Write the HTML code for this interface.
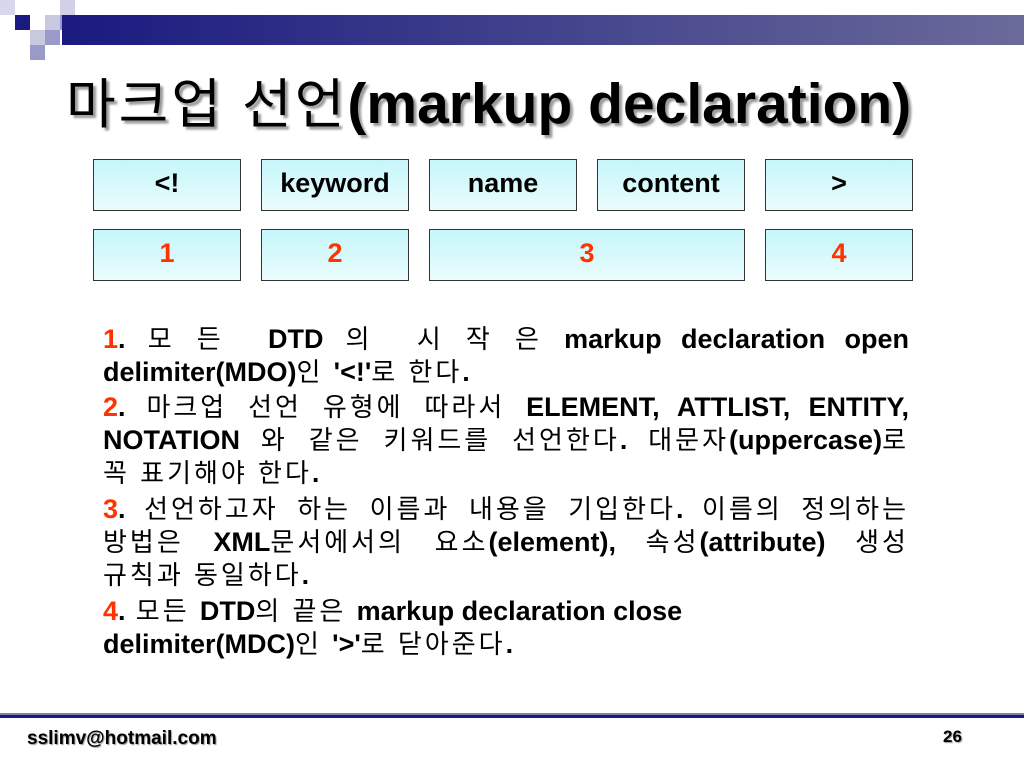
<!DOCTYPE html>
<html><head><meta charset="utf-8"><style>
*{margin:0;padding:0}
body{width:1024px;height:768px;position:relative;background:#fff;overflow:hidden;font-family:"Liberation Sans",Arial,"Noto Sans CJK KR",sans-serif}
.sq{position:absolute;width:15px;height:15px}
.bar{position:absolute;left:62px;top:15px;width:962px;height:30px;background:linear-gradient(90deg,#1a1a80,#3a3a8a 40%,#6a6a9a)}
.title{position:absolute;left:66px;top:71px;font-size:54px;letter-spacing:3px;line-height:66px;white-space:nowrap;color:#000;text-shadow:3px 3px 2px #999}
.title b{font-weight:bold;font-size:57px;letter-spacing:0}
.box{position:absolute;height:52px;border:1px solid #333;box-sizing:border-box;background:linear-gradient(180deg,#c6f6fb,#eafcfd);text-align:center;font-size:27px;font-weight:bold;line-height:47px}
.r{color:#ff3300}
.ln{position:absolute;left:103px;width:806px;font-size:26px;letter-spacing:3px;line-height:33px;white-space:nowrap}
.j{text-align:justify;text-align-last:justify;white-space:normal}
.ln b{font-weight:bold;font-size:27px;letter-spacing:0}
.foot{position:absolute;font-size:19px;font-weight:bold;text-shadow:1px 1px 1px #999}
</style></head><body>
<div class="sq" style="left:0;top:0;background:#d8d8ec"></div>
<div class="sq" style="left:15px;top:15px;background:#1a1a80"></div>
<div class="sq" style="left:30px;top:30px;background:#c8c8e0"></div>
<div class="sq" style="left:30px;top:45px;background:#9a9ac8"></div>
<div class="sq" style="left:45px;top:15px;background:#c8c8e0"></div>
<div class="sq" style="left:45px;top:30px;background:#9a9ac8"></div>
<div class="sq" style="left:60px;top:0;background:#d0d0e8"></div>
<div class="sq" style="left:60px;top:15px;background:#9a9ac8"></div>
<div class="bar"></div>
<div class="title">마크업 선언<b>(markup declaration)</b></div>

<div class="box" style="left:93px;top:159px;width:148px">&lt;!</div>
<div class="box" style="left:261px;top:159px;width:148px">keyword</div>
<div class="box" style="left:429px;top:159px;width:148px">name</div>
<div class="box" style="left:597px;top:159px;width:148px">content</div>
<div class="box" style="left:765px;top:159px;width:148px">&gt;</div>
<div class="box r" style="left:93px;top:229px;width:148px">1</div>
<div class="box r" style="left:261px;top:229px;width:148px">2</div>
<div class="box r" style="left:429px;top:229px;width:316px">3</div>
<div class="box r" style="left:765px;top:229px;width:148px">4</div>

<div class="ln j" style="top:323px"><b><span class="r">1</span>.</b> 모 든 &nbsp;<b>DTD</b> 의 &nbsp;시 작 은 <b>markup declaration open</b></div>
<div class="ln" style="top:356px"><b>delimiter(MDO)</b>인 <b>'&lt;!'</b>로 한다<b>.</b></div>
<div class="ln j" style="top:391px"><b><span class="r">2</span>.</b> 마크업 선언 유형에 따라서 <b>ELEMENT, ATTLIST, ENTITY,</b></div>
<div class="ln j" style="top:424px"><b>NOTATION</b> 와 같은 키워드를 선언한다<b>.</b> 대문자<b>(uppercase)</b>로</div>
<div class="ln" style="top:457px">꼭 표기해야 한다<b>.</b></div>
<div class="ln j" style="top:493px"><b><span class="r">3</span>.</b> 선언하고자 하는 이름과 내용을 기입한다<b>.</b> 이름의 정의하는</div>
<div class="ln j" style="top:526px">방법은 <b>XML</b>문서에서의 요소<b>(element),</b> 속성<b>(attribute)</b> 생성</div>
<div class="ln" style="top:559px">규칙과 동일하다<b>.</b></div>
<div class="ln" style="top:595px"><b><span class="r">4</span>.</b> 모든 <b>DTD</b>의 끝은 <b>markup declaration close</b></div>
<div class="ln" style="top:628px"><b>delimiter(MDC)</b>인 <b>'&gt;'</b>로 닫아준다<b>.</b></div>

<div style="position:absolute;left:0;top:713px;width:1024px;height:2px;background:#8080b0"></div>
<div style="position:absolute;left:0;top:715px;width:1024px;height:3px;background:#1a1a80"></div>
<div class="foot" style="left:27px;top:728px">sslimv@hotmail.com</div>
<div class="foot" style="left:943px;top:727px;font-size:17px">26</div>
</body></html>
